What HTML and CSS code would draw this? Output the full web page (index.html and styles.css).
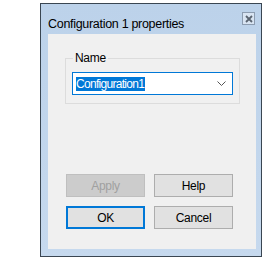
FILE: index.html
```html
<!DOCTYPE html>
<html lang="en">
<head>
    <meta charset="UTF-8">
    <title>Configuration 1 properties</title>
    <link rel="stylesheet" href="styles.css">
</head>
<body>
    <div class="window">
        <div class="titlebar">
            <span class="title">Configuration 1 properties</span>
            <span class="close">
                <svg width="8" height="8" viewBox="0 0 8 8">
                    <path d="M1 1 L7 7 M7 1 L1 7" stroke="#5a6470" stroke-width="1.8" fill="none"/>
                </svg>
            </span>
        </div>
        <div class="client">
            <fieldset class="group">
                <legend>Name</legend>
                <div class="combo">
                    <span class="selected">Configuration1</span>
                    <svg class="chevron" width="9" height="5" viewBox="0 0 9 5">
                        <path d="M0.5 0.5 L4.5 4.5 L8.5 0.5" stroke="#555" stroke-width="1" fill="none"/>
                    </svg>
                </div>
            </fieldset>
            <div class="button-grid">
                <button class="btn disabled">Apply</button>
                <button class="btn">Help</button>
                <button class="btn default">OK</button>
                <button class="btn">Cancel</button>
            </div>
        </div>
    </div>
</body>
</html>
```

FILE: styles.css
```css
body {
    margin: 0;
    background: #ffffff;
    font-family: 'Liberation Sans', Arial, sans-serif;
    font-size: 11.5px;
    letter-spacing: -0.3px;
}
.window {
    margin: 3px 0 0 40px;
    width: 222px;
    height: 254px;
    box-sizing: border-box;
    border: 1px solid #3a4652;
    background: linear-gradient(#bcd2ea, #c6d9ee);
    padding: 0 5px 7px 7px;
    display: flex;
    flex-direction: column;
}
.titlebar {
    height: 30px;
    display: flex;
    align-items: flex-start;
    justify-content: space-between;
}
.title {
    margin-top: 13px;
    font-size: 12.5px;
    letter-spacing: -0.3px;
    color: #000;
}
.close {
    margin-top: 8px;
    margin-right: 1px;
    width: 11px;
    height: 11px;
    border: 1px solid #8c9cb0;
    background: #d8e4f2;
    display: flex;
    align-items: center;
    justify-content: center;
}
.client {
    flex: 1;
    background: #f0f0f0;
    padding: 17px 17px 0 17px;
}
.group {
    margin: 0;
    width: 175px;
    box-sizing: border-box;
    border: 1px solid #dcdcdc;
    padding: 7px 6px 8px 6px;
}
.group legend {
    padding: 0 2px;
    margin-left: 1px;
    line-height: 14px;
    font-size: 12px;
    color: #000;
}
.combo {
    height: 23px;
    box-sizing: border-box;
    border: 1px solid #0078d7;
    background: #fff;
    display: flex;
    align-items: center;
    justify-content: space-between;
    padding: 0 6px 0 3px;
}
.selected {
    background: #0078d7;
    color: #fff;
    font-size: 12px;
    letter-spacing: -0.7px;
    line-height: 14px;
    padding-right: 1px;
}
.chevron {
    display: block;
}
.button-grid {
    margin: 70px 0 0 1px;
    display: grid;
    grid-template-columns: 79px 79px;
    grid-auto-rows: 23px;
    gap: 9px;
}
.btn {
    margin: 0;
    font-family: inherit;
    font-size: 12px;
    letter-spacing: -0.3px;
    color: #000;
    background: #e1e1e1;
    border: 1px solid #adadad;
    padding: 0;
}
.btn.disabled {
    background: #cccccc;
    border-color: #bfbfbf;
    color: #a0a0a0;
}
.btn.default {
    border: 2px solid #0078d7;
}
```
